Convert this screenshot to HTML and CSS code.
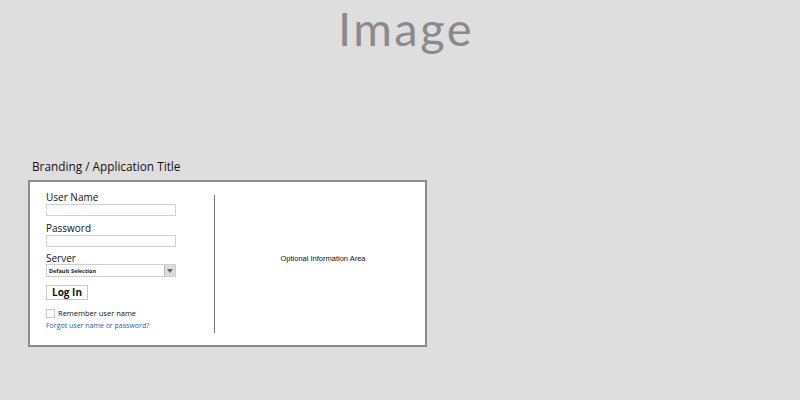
FILE: index.html
```html
<!DOCTYPE html>
<html>
<head>
<meta charset="utf-8">
<link rel="stylesheet" href="styles.css">
</head>
<body>
<div class="hero">Image</div>
<div class="panel">
  <div class="brand">Branding / Application Title</div>
  <div class="box">
    <div class="form">
      <div class="label">User Name</div>
      <div class="input"></div>
      <div class="label">Password</div>
      <div class="input input-last"></div>
      <div class="label label-tight">Server</div>
      <div class="select"><span class="sel-text">Default Selection</span><span class="sel-btn"><svg width="6" height="4" viewBox="0 0 6 4"><path d="M0 0H6L3 4Z" fill="#666"/></svg></span></div>
      <div class="button">Log In</div>
      <div class="check"><span class="cbox"></span><span>Remember user name</span></div>
      <div class="link">Forgot user name or password?</div>
    </div>
    <div class="divider"></div>
    <div class="info">Optional Information Area</div>
  </div>
</div>
</body>
</html>
```
FILE: styles.css
```css
html, body {
  margin: 0;
  padding: 0;
  background: #dedede;
  font-family: "Open Sans", "Noto Sans", sans-serif;
  color: #111;
}
.hero {
  box-sizing: border-box;
  height: 156px;
  text-align: center;
  padding-left: 12px;
  font-family: Lato, "Open Sans", sans-serif;
  font-weight: 400;
  font-size: 47px;
  letter-spacing: 2.5px;
  line-height: normal;
  color: #8a8a8a;
}
.panel {
  margin-left: 28px;
  width: 399px;
}
.brand {
  font-size: 11.8px;
  line-height: 20px;
  padding-left: 4px;
  height: 24px;
  color: #111;
}
.box {
  box-sizing: border-box;
  height: 167px;
  background: #fff;
  border: 2px solid #8c8c8c;
  display: flex;
}
.form {
  width: 168px;
  padding: 9px 0 0 16px;
  display: flex;
  flex-direction: column;
}
.label {
  font-size: 10px;
  line-height: 12px;
  height: 12px;
  margin-bottom: 1px;
}
.label-tight {
  margin-bottom: 0;
}
.input {
  box-sizing: border-box;
  width: 130px;
  height: 12px;
  border: 1px solid #d2d2d2;
  margin-bottom: 6px;
}
.input-last {
  margin-bottom: 5px;
}
.select {
  box-sizing: border-box;
  width: 130px;
  height: 13px;
  border: 1px solid #cfcfcf;
  display: flex;
  align-items: center;
}
.sel-text {
  flex: 1;
  font-size: 5.5px;
  font-weight: 700;
  padding-left: 2px;
  color: #222;
}
.sel-btn {
  width: 10px;
  height: 11px;
  background: #dcdcdc;
  border-left: 1px solid #bbb;
  display: flex;
  align-items: center;
  justify-content: center;
}
.button {
  box-sizing: border-box;
  width: 42px;
  height: 15px;
  margin-top: 8px;
  border: 1px solid #c8c8c8;
  font-size: 10px;
  font-weight: 700;
  line-height: 13px;
  text-align: center;
  background: #fff;
}
.check {
  display: flex;
  align-items: center;
  margin-top: 8px;
  font-size: 7.5px;
  line-height: 10px;
  gap: 3px;
}
.cbox {
  box-sizing: border-box;
  width: 9px;
  height: 9px;
  border: 1px solid #c8c8c8;
}
.link {
  margin-top: 3px;
  font-size: 7px;
  line-height: 10px;
  color: #1f5fb0;
}
.divider {
  width: 1px;
  background: #777;
  margin: 13px 0 12px 0;
}
.info {
  flex: 1;
  display: flex;
  align-items: center;
  justify-content: center;
  font-family: "Liberation Sans", Arial, sans-serif;
  font-size: 7.5px;
  color: #111;
  padding-bottom: 10px;
  padding-left: 6px;
}
```
